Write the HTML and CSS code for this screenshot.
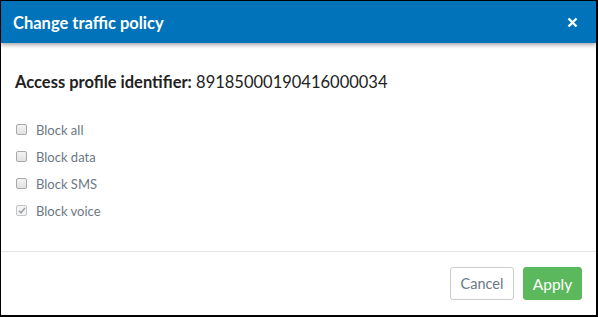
FILE: index.html
```html
<!DOCTYPE html>
<html>
<head>
<meta charset="utf-8">
<link rel="stylesheet" href="styles.css">
</head>
<body>
<div class="modal">
  <div class="header">
    <span class="title">Change traffic policy</span>
    <span class="close">
      <svg width="11" height="11" viewBox="0 0 11 11"><path d="M1.5 1.5 L9.5 9.5 M9.5 1.5 L1.5 9.5" stroke="#fff" stroke-width="2.4" stroke-linecap="butt"/></svg>
    </span>
  </div>
  <div class="body">
    <div class="ident"><b>Access profile identifier:</b> 89185000190416000034</div>
    <ul class="checks">
      <li><span class="cb"></span>Block all</li>
      <li><span class="cb"></span>Block data</li>
      <li><span class="cb"></span>Block SMS</li>
      <li><span class="cb checked"><svg width="8" height="7" viewBox="0 0 8 7"><path d="M1 3.8 L3 5.8 L7 1" fill="none" stroke="#9aa3ab" stroke-width="1.6"/></svg></span>Block voice</li>
    </ul>
  </div>
  <div class="footer">
    <button class="btn cancel">Cancel</button>
    <button class="btn apply">Apply</button>
  </div>
</div>
</body>
</html>
```
FILE: styles.css
```css
html, body { margin: 0; padding: 0; }
body { width: 598px; height: 317px; background: #fff; font-family: Lato, "Noto Sans", sans-serif; }
.modal {
  box-sizing: border-box;
  width: 598px; height: 317px;
  border-style: solid; border-color: #000;
  border-width: 1px 2px 2px 1px;
  display: flex; flex-direction: column;
  background: #fff;
}
.header {
  height: 42px;
  background: #0073bb;
  display: flex; align-items: center; justify-content: space-between;
  padding: 0 18px 0 12px;
  box-shadow: 0 2px 4px rgba(0,0,0,0.35);
  position: relative;
}
.title { color: #fff; font-weight: 700; font-size: 16.5px; padding-top: 1px; }
.close { display: flex; }
.body { flex: 1; padding: 29px 14px 0; border-bottom: 1px solid #e3e3e3; }
.ident { font-size: 16.5px; color: #222; }
.ident b { font-weight: 700; }
.checks { list-style: none; margin: 24px 0 0; padding: 0; }
.checks li { display: flex; align-items: center; height: 27px; font-size: 13px; color: #6c7885; }
.cb {
  box-sizing: border-box;
  width: 11px; height: 11px; margin: 0 9px 0 1px;
  border: 1px solid #a9a9a9; border-radius: 2px;
  background: linear-gradient(#f3f3f3, #e2e2e2);
  display: flex; align-items: center; justify-content: center;
}
.cb.checked { border-color: #c5c5c5; background: #f4f4f4; }
.footer { height: 63px; display: flex; justify-content: flex-end; align-items: center; padding: 0 14px 0 0; gap: 9px; }
.btn { height: 33px; border-radius: 3px; font-family: Lato, sans-serif; font-size: 14.5px; padding: 0 8px; }
.cancel { background: #fff; border: 1px solid #ccc; color: #6c7885; width: 64px; }
.apply { background: #5cb85c; border: 1px solid #5cb85c; color: #fff; width: 59px; font-size: 15.5px; }
```
